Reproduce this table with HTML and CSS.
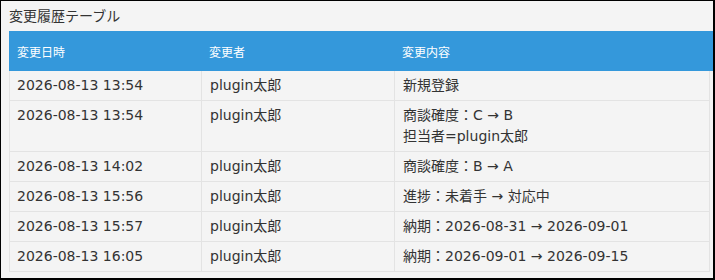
FILE: index.html
```html
<!DOCTYPE html>
<html lang="ja">
<head>
<meta charset="utf-8">
<title>変更履歴テーブル</title>
<link rel="stylesheet" href="styles.css">
</head>
<body>
<div class="frame">
  <div class="title">変更履歴テーブル</div>
  <div class="thead">
    <div class="th">変更日時</div>
    <div class="th">変更者</div>
    <div class="th">変更内容</div>
  </div>
  <div class="tbody">
    <div class="tr"><div class="td">2026-08-13 13:54</div><div class="td">plugin太郎</div><div class="td">新規登録</div></div>
    <div class="tr"><div class="td">2026-08-13 13:54</div><div class="td">plugin太郎</div><div class="td">商談確度：C → B<br>担当者=plugin太郎</div></div>
    <div class="tr"><div class="td">2026-08-13 14:02</div><div class="td">plugin太郎</div><div class="td">商談確度：B → A</div></div>
    <div class="tr"><div class="td">2026-08-13 15:56</div><div class="td">plugin太郎</div><div class="td">進捗：未着手 → 対応中</div></div>
    <div class="tr"><div class="td">2026-08-13 15:57</div><div class="td">plugin太郎</div><div class="td">納期：2026-08-31 → 2026-09-01</div></div>
    <div class="tr"><div class="td">2026-08-13 16:05</div><div class="td">plugin太郎</div><div class="td">納期：2026-09-01 → 2026-09-15</div></div>
  </div>
</div>
</body>
</html>
```

FILE: styles.css
```css
html, body {
  margin: 0;
  padding: 0;
  background: #ffffff;
}

.frame {
  box-sizing: border-box;
  width: 715px;
  height: 280px;
  border: 1px solid #000;
  border-right-width: 2px;
  border-bottom-width: 2px;
  background: #f4f4f4;
  padding-left: 8px;
  overflow: hidden;
  font-family: "DejaVu Sans", "Noto Sans CJK JP", sans-serif;
  color: #333333;
}

.title {
  font-size: 14px;
  line-height: 30px;
  height: 30px;
}

.thead {
  display: grid;
  grid-template-columns: 192px 193px 1fr;
  height: 40px;
  background: #3498db;
  color: #ffffff;
  font-size: 12px;
}

.th {
  display: flex;
  align-items: center;
  padding-left: 8px;
}

.tbody {
  width: 701px;
}

.tr {
  display: grid;
  grid-template-columns: 192px 193px 316px;
  border-bottom: 1px solid #e3e3e3;
}

.td {
  border-left: 1px solid #e3e3e3;
  padding: 4px 8px;
  font-size: 14px;
  line-height: 21px;
}

.td:first-child {
  padding-left: 7px;
}

.td:last-child {
  border-right: 1px solid #e3e3e3;
}
```
